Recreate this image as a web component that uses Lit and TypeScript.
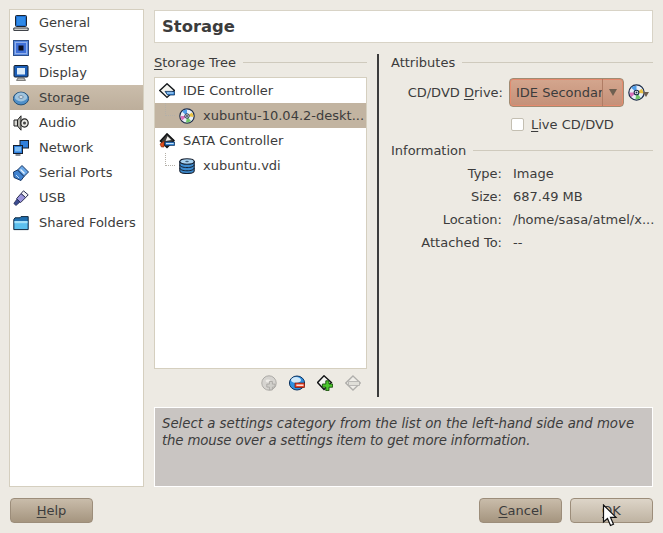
import { LitElement, html, css, svg } from "lit";
import { customElement } from "lit/decorators.js";

const icon = (body: unknown, size = 16) =>
  html`<svg class="icon" width=${size} height=${size} viewBox="0 0 16 16">${body}</svg>`;

const disc = svg`
  <circle cx="8" cy="8" r="7.2" fill="#e8eef8" stroke="#1c2c48" stroke-width="1.2"/>
  <path d="M8 8 L3 3.5 A6.6 6.6 0 0 1 8 1.6Z" fill="#4f9ce8"/>
  <path d="M8 8 L13 4.5 A6.6 6.6 0 0 1 14.4 9Z" fill="#e8c040"/>
  <path d="M8 8 L12 13 A6.6 6.6 0 0 1 7 14.4Z" fill="#70c868"/>
  <path d="M8 8 L3 12.4 A6.6 6.6 0 0 1 1.6 8Z" fill="#d870b8"/>
  <circle cx="8" cy="8" r="2.2" fill="#fff" stroke="#1c2c48"/>
  <circle cx="8" cy="8" r=".9" fill="#1c2c48"/>`;

const navIcons: Record<string, unknown> = {
  General: svg`
    <rect x="2.5" y=".5" width="11" height="11" rx="1" fill="#1d6fd0" stroke="#1c2530"/>
    <rect x="4" y="2" width="8" height="8" fill="#2f8ae8"/>
    <path d="M.8 13h14.4v2.4H.8z" fill="#e4e4e0" stroke="#2c3036"/>`,
  System: svg`
    <rect x=".5" y=".5" width="15" height="15" fill="#5a8ae0" stroke="#2d4f8a"/>
    <rect x="2.5" y="2.5" width="11" height="11" fill="#3f70d8" stroke="#d8e4f8" stroke-dasharray="1 1"/>
    <rect x="5.5" y="5.5" width="5" height="5" fill="#0c1020"/>`,
  Display: svg`
    <rect x="1" y=".5" width="14" height="11.5" rx="1" fill="#1c5fb8" stroke="#141e2c"/>
    <rect x="4" y="3" width="8" height="6.5" fill="#dcecfa"/>
    <path d="M5 13h6l1.5 2.4h-9z" fill="#c8c8c4" stroke="#444" stroke-width=".7"/>`,
  Storage: svg`
    <ellipse cx="8" cy="8.5" rx="7.6" ry="6.4" fill="#4f8fc8" stroke="#245078"/>
    <ellipse cx="8" cy="7" rx="6.2" ry="4.4" fill="#a0c4de"/>
    <ellipse cx="8" cy="7" rx="2.2" ry="1.4" fill="#e8eef4" stroke="#4a6a88" stroke-width=".7"/>`,
  Audio: svg`
    <path d="M1 5h3.5v6H1z" fill="#d8d8d4" stroke="#222"/>
    <path d="M4.5 5 8 .8v14.4L4.5 11z" fill="#b0b0aa" stroke="#222"/>
    <ellipse cx="11.5" cy="8" rx="3.7" ry="4.2" fill="#e8e8e4" stroke="#222" stroke-width="1.2"/>
    <circle cx="11.5" cy="8" r="1.5" fill="#444"/>`,
  Network: svg`
    <rect x="7" y=".5" width="8.5" height="7.5" fill="#2f7fdc" stroke="#141e2e"/>
    <rect x=".5" y="5.5" width="9" height="8" fill="#2f7fdc" stroke="#141e2e"/>
    <rect x="2" y="7" width="6" height="4.5" fill="#7dbcf4"/>
    <path d="M2.5 15h5" stroke="#141e2e"/>`,
  "Serial Ports": svg`
    <path d="M9 .5 15.5 7 11 11.5 4.5 5z" fill="#6aa8e8" stroke="#163462"/>
    <path d="M7.5 4.5 11.5 8.5" stroke="#e8f2fc" stroke-width="1.4"/>
    <path d="M4.5 5 11 11.5l-3 4-7-3L.5 7z" fill="#3f82d0" stroke="#163462"/>
    <path d="M3 10l3 3" stroke="#bcdcf8"/>`,
  USB: svg`
    <path d="M10.5 .8l4.7 4-2.6 2.8-4.6-4z" fill="#f0f0f4" stroke="#2c3052"/>
    <path d="M8 3.6 12.6 7.6 7.6 12.6 3.6 8.6z" fill="#9a94dc" stroke="#2c3052"/>
    <path d="M4 9l3 3-4 3.5-2.2-2z" fill="#3c4c90" stroke="#1e2850" stroke-width=".7"/>`,
  "Shared Folders": svg`
    <path d="M.8 4.5 2 2.8H7L8 1.6h7.2v13H.8z" fill="#1f6fb0" stroke="#122a40"/>
    <path d="M1.5 6h13v8h-13z" fill="#5cc0ee"/>
    <path d="M1.5 6h13v2.2h-13z" fill="#a4e0f8"/>`,
};

const ideIcon = svg`
  <path d="M8 .8 15.4 7.5 8 14.4.8 7.5z" fill="#f4f4f0" stroke="#14181c" stroke-width="1.4"/>
  <path d="M6 8.4h9.6v3.6H8.6z" fill="#2f86dc" stroke="#143258" stroke-width=".8"/>
  <path d="M8 10h6.4" stroke="#d8ecfc"/>`;

const sataIcon = svg`
  <path d="M8 .8 15 7.5 8 14.4 1.4 8z" fill="#3c3c3c" stroke="#101214" stroke-width="1.4"/>
  <path d="M8.5 3.2 12.2 7 6.6 8z" fill="#f2f2ee"/>
  <path d="M1 11 5 8v6H2.4z" fill="#e4501c" stroke="#7c280a" stroke-width=".6"/>
  <path d="M6 9h9.6v3.4H6z" fill="#2f86dc" stroke="#143258" stroke-width=".8"/>
  <path d="M7 10.6h7.6" stroke="#d8ecfc"/>`;

const vdiIcon = svg`
  <path d="M.8 3.5v9.2c0 1.6 3.2 2.8 7.2 2.8s7.2-1.2 7.2-2.8V3.5z" fill="#3d8cd0" stroke="#141f30" stroke-width="1.1"/>
  <ellipse cx="8" cy="3.5" rx="7.2" ry="2.8" fill="#a8d2f0" stroke="#141f30" stroke-width="1.1"/>
  <path d="M.8 6.8c0 1.6 3.2 2.8 7.2 2.8s7.2-1.2 7.2-2.8M.8 10c0 1.6 3.2 2.8 7.2 2.8s7.2-1.2 7.2-2.8" fill="none" stroke="#141f30"/>
  <ellipse cx="8" cy="3.5" rx="1.8" ry=".8" fill="#40607c"/>`;

const tools = [
  svg`<g opacity=".42"><circle cx="8" cy="8" r="7.2" fill="#b8b8b8" stroke="#555"/><ellipse cx="7" cy="6" rx="2.4" ry="1.4" fill="#eee"/><path d="M8.4 6.5h3v2.6H14v3h-2.6v2.8h-3v-2.8H5.8v-3h2.6z" fill="#aaa" stroke="#444" stroke-width=".8"/></g>`,
  svg`<ellipse cx="8" cy="8" rx="7.6" ry="7" fill="#2f8fe0" stroke="#0e3460"/><ellipse cx="7" cy="5" rx="5" ry="3" fill="#cfe8fa"/><rect x="6" y="8" width="9.6" height="4.6" fill="#e8442a" stroke="#6c180c" stroke-width=".7"/><path d="M7.4 10.2h7" stroke="#fff" stroke-width="1.3"/>`,
  svg`<path d="M7 .8 14.4 7.5 7 14.4.6 7.5z" fill="#f6f6f2" stroke="#101214" stroke-width="1.4"/><path d="M8.8 5.8h3.2v3.2h3.6v3.2H12v3.4H8.8v-3.4H5.4V9h3.4z" fill="#4cc82c" stroke="#174e0c" stroke-width=".9"/>`,
  svg`<g opacity=".6"><path d="M8 1 15.4 8 8 15 .8 8z" fill="#f2f2ee" stroke="#888" stroke-width="1.3"/><rect x="3.6" y="6.6" width="10.8" height="3.8" fill="#d8d8d4" stroke="#888" stroke-width=".8"/></g>`,
];

const details = [
  ["Type:", "Image"],
  ["Size:", "687.49 MB"],
  ["Location:", "/home/sasa/atmel/x..."],
  ["Attached To:", "--"],
];

@customElement("app-root")
export class AppRoot extends LitElement {
  static styles = css`
    :host {
      display: block;
      width: 663px;
      height: 533px;
      position: relative;
      overflow: hidden;
      background: #edeae3;
      color: #3c3c3c;
      font-family: "DejaVu Sans", sans-serif;
      font-size: 13px;
    }
    .icon { display: block; flex: none; }
    u { text-underline-offset: 2px; }
    .page {
      display: flex;
      flex-direction: column;
      padding: 9px 10px 0 9px;
      height: 533px;
      box-sizing: border-box;
    }
    .top { display: flex; gap: 10px; height: 478px; }
    .nav {
      width: 135px;
      box-sizing: border-box;
      background: #fff;
      border: 1px solid #d5cfbf;
      flex: none;
    }
    .nav-row {
      display: flex;
      align-items: center;
      height: 25px;
      padding-left: 3px;
      gap: 10px;
      white-space: nowrap;
    }
    .nav-row.sel { background: linear-gradient(#cabdab, #bdae9b); }
    .main { flex: 1; display: flex; flex-direction: column; padding-top: 1px; min-width: 0; }
    .title {
      height: 33px;
      box-sizing: border-box;
      background: #fff;
      border: 1px solid #d8d3c6;
      padding-left: 7px;
      font-size: 16.4px;
      font-weight: bold;
      line-height: 32px;
      flex: none;
    }
    .body { display: flex; height: 364px; flex: none; }
    .left { width: 213px; flex: none; }
    .head {
      display: flex;
      align-items: center;
      gap: 7px;
      height: 20px;
      margin-top: 9px;
      white-space: nowrap;
    }
    .head::after {
      content: "";
      flex: 1;
      height: 1px;
      background: #cfcabd;
    }
    .tree {
      margin-top: 5px;
      height: 292px;
      box-sizing: border-box;
      background: #fff;
      border: 1px solid #d5cfbf;
    }
    .tree-row {
      display: flex;
      align-items: center;
      height: 25px;
      white-space: nowrap;
    }
    .tree-row.parent { padding-left: 4px; gap: 8px; }
    .tree-row.child { padding-left: 24px; gap: 8px; position: relative; }
    .tree-row.child::before {
      content: "";
      position: absolute;
      left: 10px;
      top: 0;
      width: 9px;
      height: 12px;
      border-left: 1px dotted #b4b0a8;
      border-bottom: 1px dotted #b4b0a8;
    }
    .tree-row.sel { background: #c2b4a1; }
    .toolbar { display: flex; justify-content: flex-end; gap: 12px; padding: 6px 6px 0 0; }
    .rule {
      width: 2px;
      flex: none;
      background: #3c3c3c;
      margin: 11px 12px 10px 10px;
    }
    .right { flex: 1; min-width: 0; }
    .head.sec { margin-top: 6px; }
    .drive-row {
      display: flex;
      align-items: center;
      margin-top: 6px;
      height: 29px;
    }
    .drive-label { width: 112px; text-align: right; white-space: nowrap; }
    .combo {
      margin-left: 6px;
      width: 115px;
      height: 29px;
      box-sizing: border-box;
      display: flex;
      align-items: center;
      border: 1px solid #a08b72;
      border-radius: 4px;
      background: linear-gradient(#d4a68e, #c49078);
      box-shadow: inset 0 0 0 1px #e58a6e;
      overflow: hidden;
      flex: none;
    }
    .combo-text {
      width: 92px;
      padding-left: 6px;
      box-sizing: border-box;
      overflow: hidden;
      white-space: nowrap;
      flex: none;
    }
    .combo-arrow {
      flex: 1;
      height: 100%;
      border-left: 1px solid #b07c64;
      display: flex;
      align-items: center;
      justify-content: center;
    }
    .arrow {
      width: 0;
      height: 0;
      border-left: 4px solid transparent;
      border-right: 4px solid transparent;
      border-top: 7px solid #6e5f50;
    }
    .disc-btn { display: flex; align-items: center; margin-left: 4px; }
    .disc-btn .arrow { border-left-width: 3px; border-right-width: 3px; border-top-width: 5px; margin-left: -2px; margin-top: 3px; }
    .check-row {
      display: flex;
      align-items: center;
      gap: 7px;
      height: 20px;
      margin: 7px 0 0 120px;
      white-space: nowrap;
    }
    .box {
      width: 11px;
      height: 11px;
      background: #fff;
      border: 1px solid #c4bfb2;
      border-radius: 2px;
      flex: none;
    }
    .info { display: grid; grid-template-columns: 111px 1fr; column-gap: 11px; margin-top: 2px; }
    .info div { height: 23px; line-height: 23px; white-space: nowrap; }
    .info .key { text-align: right; }
    .hint {
      height: 80px;
      box-sizing: border-box;
      flex: none;
      background: #c9c5c2;
      border: 1px solid #fff;
      padding: 7px 7px;
      font-style: italic;
      font-size: 13.3px;
      line-height: 17px;
    }
    .hint-line { letter-spacing: -0.15px; }
    .buttons {
      display: flex;
      justify-content: space-between;
      margin-top: 11px;
      padding-left: 1px;
    }
    .btn {
      width: 83px;
      height: 25px;
      box-sizing: border-box;
      border: 1px solid #9c8d7a;
      border-radius: 4px;
      background: linear-gradient(#c9bcaa, #a5957f);
      color: #3c3c3c;
      font: inherit;
      padding: 0;
      line-height: 23px;
      text-align: center;
    }
    .btn.hot { background: linear-gradient(#ddd5c8, #bfb3a2); }
    .right-btns { display: flex; gap: 8px; }
    .cursor { position: absolute; left: 602px; top: 504px; }
  `;

  render() {
    return html`
      <div class="page">
        <div class="top">
          <div class="nav">
            ${Object.entries(navIcons).map(
              ([name, body]) => html`
                <div class="nav-row ${name === "Storage" ? "sel" : ""}">
                  ${icon(body)}<span>${name}</span>
                </div>
              `
            )}
          </div>
          <div class="main">
            <div class="title">Storage</div>
            <div class="body">
              <div class="left">
                <div class="head"><span><u>S</u>torage Tree</span></div>
                <div class="tree">
                  <div class="tree-row parent">${icon(ideIcon)}<span>IDE Controller</span></div>
                  <div class="tree-row child sel">${icon(disc)}<span>xubuntu-10.04.2-deskt...</span></div>
                  <div class="tree-row parent">${icon(sataIcon)}<span>SATA Controller</span></div>
                  <div class="tree-row child">${icon(vdiIcon)}<span>xubuntu.vdi</span></div>
                </div>
                <div class="toolbar">${tools.map((t) => icon(t))}</div>
              </div>
              <div class="rule"></div>
              <div class="right">
                <div class="head"><span>Attributes</span></div>
                <div class="drive-row">
                  <span class="drive-label">CD/DVD <u>D</u>rive:</span>
                  <div class="combo">
                    <span class="combo-text">IDE Secondar</span>
                    <span class="combo-arrow"><span class="arrow"></span></span>
                  </div>
                  <div class="disc-btn">${icon(disc, 17)}<span class="arrow"></span></div>
                </div>
                <div class="check-row"><span class="box"></span><span><u>L</u>ive CD/DVD</span></div>
                <div class="head sec"><span>Information</span></div>
                <div class="info">
                  ${details.map(
                    ([k, v]) => html`<div class="key">${k}</div><div>${v}</div>`
                  )}
                </div>
              </div>
            </div>
            <div class="hint">
              Select a settings category from the list on the left-hand side and move<br />
              <span class="hint-line">the mouse over a settings item to get more information.</span>
            </div>
          </div>
        </div>
        <div class="buttons">
          <button class="btn"><u>H</u>elp</button>
          <div class="right-btns">
            <button class="btn"><u>C</u>ancel</button>
            <button class="btn hot"><u>O</u>K</button>
          </div>
        </div>
      </div>
      <svg class="cursor" width="16" height="23" viewBox="0 0 16 23">
        <path d="M1.5 1v17l4-3.5 3 7 3-1.3-3-6.8h5.5z" fill="#fff" stroke="#111" stroke-width="1.2"/>
      </svg>
    `;
  }
}
